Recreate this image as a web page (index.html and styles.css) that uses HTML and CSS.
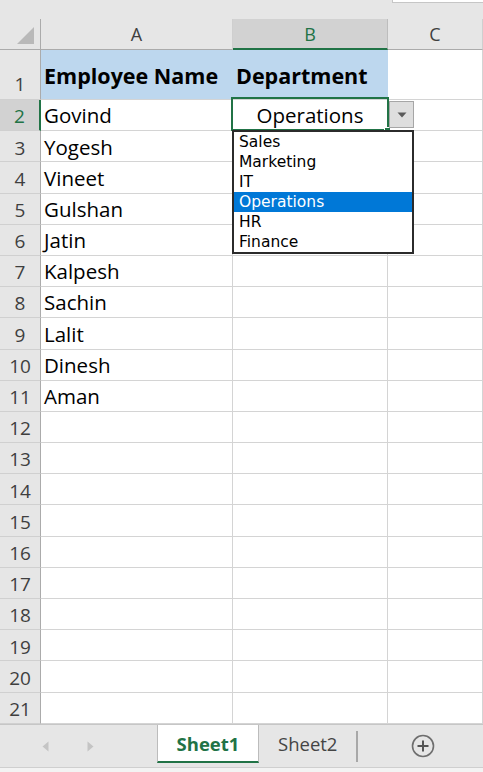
FILE: index.html
```html
<!DOCTYPE html>
<html>
<head>
<meta charset="utf-8">
<link rel="stylesheet" href="styles.css">
</head>
<body>
<div class="app">
  <div class="topbar"><div class="fxbox"></div></div>
  <div class="sheet">
    <div class="grid">
      <div class="corner"><svg width="41" height="30" viewBox="0 0 41 30"><polygon points="34,8 34,25 17,25" fill="#b9b9b9"/></svg></div>
      <div class="ch">A</div><div class="ch sel">B</div><div class="ch">C</div>

      <div class="rh top">1</div><div class="c blue b">Employee Name</div><div class="c blue b">Department</div><div class="c r1"></div>
      <div class="rh sel">2</div><div class="c">Govind</div><div class="c center">Operations</div><div class="c"></div>
      <div class="rh">3</div><div class="c">Yogesh</div><div class="c"></div><div class="c"></div>
      <div class="rh">4</div><div class="c">Vineet</div><div class="c"></div><div class="c"></div>
      <div class="rh">5</div><div class="c">Gulshan</div><div class="c"></div><div class="c"></div>
      <div class="rh">6</div><div class="c">Jatin</div><div class="c"></div><div class="c"></div>
      <div class="rh">7</div><div class="c">Kalpesh</div><div class="c"></div><div class="c"></div>
      <div class="rh">8</div><div class="c">Sachin</div><div class="c"></div><div class="c"></div>
      <div class="rh">9</div><div class="c">Lalit</div><div class="c"></div><div class="c"></div>
      <div class="rh">10</div><div class="c">Dinesh</div><div class="c"></div><div class="c"></div>
      <div class="rh">11</div><div class="c">Aman</div><div class="c"></div><div class="c"></div>
      <div class="rh">12</div><div class="c"></div><div class="c"></div><div class="c"></div>
      <div class="rh">13</div><div class="c"></div><div class="c"></div><div class="c"></div>
      <div class="rh">14</div><div class="c"></div><div class="c"></div><div class="c"></div>
      <div class="rh">15</div><div class="c"></div><div class="c"></div><div class="c"></div>
      <div class="rh">16</div><div class="c"></div><div class="c"></div><div class="c"></div>
      <div class="rh">17</div><div class="c"></div><div class="c"></div><div class="c"></div>
      <div class="rh">18</div><div class="c"></div><div class="c"></div><div class="c"></div>
      <div class="rh">19</div><div class="c"></div><div class="c"></div><div class="c"></div>
      <div class="rh">20</div><div class="c"></div><div class="c"></div><div class="c"></div>
      <div class="rh">21</div><div class="c"></div><div class="c"></div><div class="c"></div>
    </div>
    <div class="active"></div>
    <div class="handle"></div>
    <div class="ddbtn"><svg width="10" height="6" viewBox="0 0 10 6"><polygon points="0.5,0.5 9.5,0.5 5,5.5" fill="#5a5a5a"/></svg></div>
    <ul class="ddlist">
      <li>Sales</li>
      <li>Marketing</li>
      <li>IT</li>
      <li class="hl">Operations</li>
      <li>HR</li>
      <li>Finance</li>
    </ul>
  </div>
  <div class="tabs">
    <div class="nav">
      <svg width="7" height="11" viewBox="0 0 7 11"><polygon points="6.5,0.5 6.5,10.5 0.5,5.5" fill="#c4c4c4"/></svg>
      <svg width="7" height="11" viewBox="0 0 7 11"><polygon points="0.5,0.5 0.5,10.5 6.5,5.5" fill="#c4c4c4"/></svg>
    </div>
    <div class="tab active-tab">Sheet1</div>
    <div class="tab">Sheet2</div>
    <div class="sep"></div>
    <div class="add"><svg width="24" height="24" viewBox="0 0 24 24"><circle cx="12" cy="12" r="10.5" fill="none" stroke="#6e6e6e" stroke-width="1.6"/><path d="M12 6.5v11M6.5 12h11" stroke="#555" stroke-width="2"/></svg></div>
  </div>
  <div class="status"></div>
</div>
</body>
</html>
```
FILE: styles.css
```css
* { box-sizing: border-box; }
html, body { margin: 0; padding: 0; }
body {
  width: 483px;
  height: 772px;
  overflow: hidden;
  background: #ffffff;
  font-family: "Open Sans", "Noto Sans", sans-serif;
}
.app {
  display: flex;
  flex-direction: column;
  width: 483px;
  height: 772px;
}
.topbar {
  height: 19px;
  background: #e6e6e6;
  display: flex;
  justify-content: flex-end;
}
.fxbox {
  width: 91px;
  height: 3px;
  background: #ffffff;
  border-left: 1px solid #c6c6c6;
  border-bottom: 1px solid #c6c6c6;
}
.sheet {
  position: relative;
  height: 705px;
}
.grid {
  display: grid;
  grid-template-columns: 41px 192px 155px 95px;
  grid-template-rows: 31px 50px repeat(20, 31.2px);
  height: 705px;
}
.corner, .ch, .rh {
  background: #e6e6e6;
  color: #3f3f3f;
}
.corner {
  border-right: 1px solid #ababab;
  border-bottom: 1px solid #ababab;
}
.corner svg { display: block; }
.ch {
  display: flex;
  align-items: center;
  justify-content: center;
  font-size: 18px;
  border-right: 1px solid #cfcfcf;
  border-bottom: 1px solid #ababab;
}
.ch.sel {
  background: #d2d2d2;
  color: #217346;
  border-bottom: 2px solid #217346;
  border-right-color: #bdbdbd;
}
.rh {
  display: flex;
  align-items: flex-end;
  justify-content: center;
  font-size: 19px;
  line-height: 1.36;
  border-right: 1px solid #ababab;
  border-bottom: 1px solid #d0d0d0;
}
.rh.top { padding-bottom: 1px; }
.rh.sel {
  background: #d2d2d2;
  color: #217346;
  border-right: 2px solid #217346;
}
.c {
  display: flex;
  align-items: flex-end;
  padding-left: 3px;
  font-size: 20.5px;
  line-height: 1.36;
  color: #000000;
  white-space: nowrap;
  overflow: hidden;
  border-right: 1px solid #d4d4d4;
  border-bottom: 1px solid #d4d4d4;
}
.c.blue {
  background: #bdd7ee;
  align-items: center;
  padding-top: 2px;
  border-right-color: #bdd7ee;
  border-bottom-color: #d4d4d4;
}
.c.b { font-weight: 700; font-size: 21.5px; }
.c.center { justify-content: center; padding-left: 0; }
.active {
  position: absolute;
  left: 231px;
  top: 78px;
  width: 158px;
  height: 34px;
  border: 2px solid #217346;
}
.handle {
  position: absolute;
  left: 384px;
  top: 108px;
  width: 7px;
  height: 7px;
  background: #217346;
  border: 1px solid #ffffff;
}
.ddbtn {
  position: absolute;
  left: 389px;
  top: 82px;
  width: 25px;
  height: 27px;
  background: #dedede;
  border: 1px solid #a6a6a6;
  display: flex;
  align-items: center;
  justify-content: center;
}
.ddbtn svg { display: block; margin-top: 1px; }
.ddlist {
  position: absolute;
  left: 232px;
  top: 111px;
  width: 182px;
  height: 124px;
  margin: 0;
  padding: 0;
  list-style: none;
  background: #ffffff;
  border: 2px solid #2b2b2b;
  font-family: "DejaVu Sans", "Open Sans", sans-serif;
  font-size: 15.5px;
  color: #000000;
}
.ddlist li {
  height: 20px;
  line-height: 20px;
  padding-left: 5px;
}
.ddlist li.hl {
  background: #0078d7;
  color: #ffffff;
}
.tabs {
  height: 44px;
  background: #e6e6e6;
  border-top: 1px solid #c6c6c6;
  border-bottom: 1px solid #cfcfcf;
  display: flex;
  align-items: flex-start;
}
.nav {
  width: 157px;
  height: 42px;
  display: flex;
  align-items: center;
  padding-left: 42px;
  gap: 38px;
}
.nav svg { display: block; margin-top: 1px; }
.tab {
  height: 38px;
  display: flex;
  align-items: center;
  justify-content: center;
  font-size: 18.5px;
  color: #444444;
  padding: 0 19px 2px 19px;
}
.active-tab {
  width: 102px;
  background: #ffffff;
  border-left: 1px solid #bcbcbc;
  border-right: 1px solid #bcbcbc;
  border-bottom: 2px solid #217346;
  color: #217346;
  font-weight: 700;
  font-size: 18.5px;
  padding: 0;
}
.sep {
  width: 2px;
  height: 31px;
  margin-top: 6px;
  margin-left: 0;
  background: #a8a8a8;
}
.add {
  margin-left: 53px;
  height: 42px;
  display: flex;
  align-items: center;
}
.add svg { display: block; }
.status {
  flex: 1;
  background: #f3f3f3;
}
```
